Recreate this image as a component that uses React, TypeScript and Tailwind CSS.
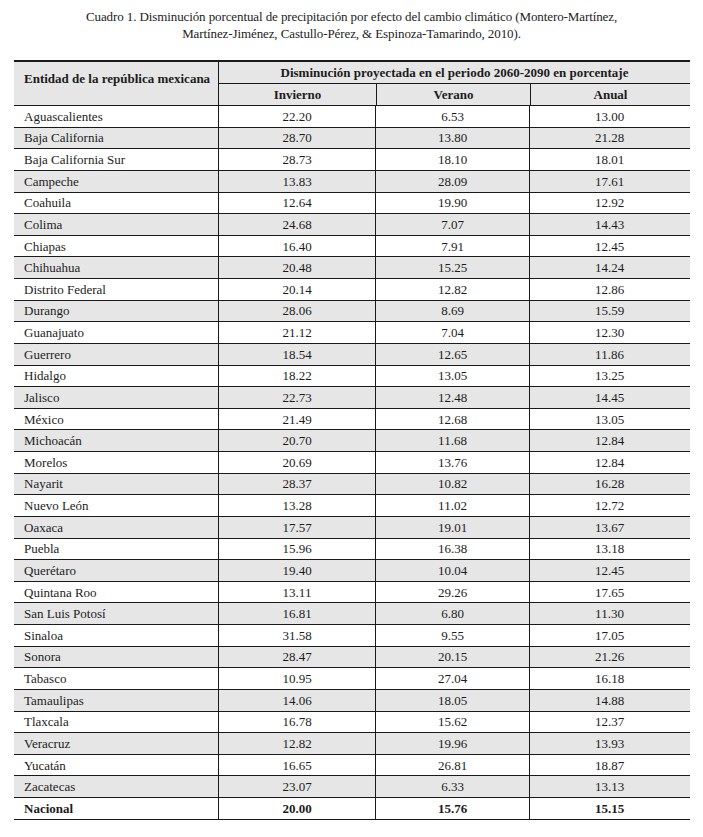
const rows: [string, string, string, string][] = [
  ["Aguascalientes", "22.20", "6.53", "13.00"],
  ["Baja California", "28.70", "13.80", "21.28"],
  ["Baja California Sur", "28.73", "18.10", "18.01"],
  ["Campeche", "13.83", "28.09", "17.61"],
  ["Coahuila", "12.64", "19.90", "12.92"],
  ["Colima", "24.68", "7.07", "14.43"],
  ["Chiapas", "16.40", "7.91", "12.45"],
  ["Chihuahua", "20.48", "15.25", "14.24"],
  ["Distrito Federal", "20.14", "12.82", "12.86"],
  ["Durango", "28.06", "8.69", "15.59"],
  ["Guanajuato", "21.12", "7.04", "12.30"],
  ["Guerrero", "18.54", "12.65", "11.86"],
  ["Hidalgo", "18.22", "13.05", "13.25"],
  ["Jalisco", "22.73", "12.48", "14.45"],
  ["México", "21.49", "12.68", "13.05"],
  ["Michoacán", "20.70", "11.68", "12.84"],
  ["Morelos", "20.69", "13.76", "12.84"],
  ["Nayarit", "28.37", "10.82", "16.28"],
  ["Nuevo León", "13.28", "11.02", "12.72"],
  ["Oaxaca", "17.57", "19.01", "13.67"],
  ["Puebla", "15.96", "16.38", "13.18"],
  ["Querétaro", "19.40", "10.04", "12.45"],
  ["Quintana Roo", "13.11", "29.26", "17.65"],
  ["San Luis Potosí", "16.81", "6.80", "11.30"],
  ["Sinaloa", "31.58", "9.55", "17.05"],
  ["Sonora", "28.47", "20.15", "21.26"],
  ["Tabasco", "10.95", "27.04", "16.18"],
  ["Tamaulipas", "14.06", "18.05", "14.88"],
  ["Tlaxcala", "16.78", "15.62", "12.37"],
  ["Veracruz", "12.82", "19.96", "13.93"],
  ["Yucatán", "16.65", "26.81", "18.87"],
  ["Zacatecas", "23.07", "6.33", "13.13"],
];

const cols = "grid grid-cols-[204px_157px_154px_160px]";

function Row({ cells, shaded, bold }: { cells: string[]; shaded?: boolean; bold?: boolean }) {
  return (
    <div
      className={`${cols} h-[21.64px] border-b border-[#1a1a1a] text-[13px] leading-none ${
        shaded ? "bg-[#e6e6e6]" : "bg-white"
      } ${bold ? "font-bold" : ""}`}
    >
      <div className="flex items-center pl-[10px]">{cells[0]}</div>
      {cells.slice(1).map((c, i) => (
        <div key={i} className="flex items-center justify-center border-l border-[#1a1a1a]">
          {c}
        </div>
      ))}
    </div>
  );
}

export default function App() {
  return (
    <div className="h-[837px] w-[703px] bg-white pt-[8px] font-['Liberation_Serif',serif] text-[#1c1c1c]">
      <p className="text-center text-[13px] leading-[17px] tracking-[-0.1px] text-[#222]">
        Cuadro 1. Disminución porcentual de precipitación por efecto del cambio climático (Montero-Martínez,
        <br />
        Martínez-Jiménez, Castullo-Pérez, &amp; Espinoza-Tamarindo, 2010).
      </p>

      <div className="ml-[14px] mt-[18px] w-[676px]">
        <div className="flex border-t-2 border-b border-[#1a1a1a] bg-[#e6e6e6] font-bold">
          <div className="flex h-[43px] w-[204px] items-start pl-[10px] pt-[7px] text-[13px]">
            Entidad de la república mexicana
          </div>
          <div className="flex-1 border-l border-[#1a1a1a]">
            <div className="flex h-[22px] items-center justify-center border-b border-[#1a1a1a] text-[13px]">
              Disminución proyectada en el periodo 2060-2090 en porcentaje
            </div>
            <div className="grid h-[21px] grid-cols-[157px_154px_160px] text-[13px]">
              <div className="flex items-center justify-center">Invierno</div>
              <div className="flex items-center justify-center border-l border-[#1a1a1a]">Verano</div>
              <div className="flex items-center justify-center border-l border-[#1a1a1a]">Anual</div>
            </div>
          </div>
        </div>
        {rows.map((r, i) => (
          <Row key={r[0]} cells={r} shaded={i % 2 === 1} />
        ))}
        <Row cells={["Nacional", "20.00", "15.76", "15.15"]} bold />
      </div>
    </div>
  );
}
